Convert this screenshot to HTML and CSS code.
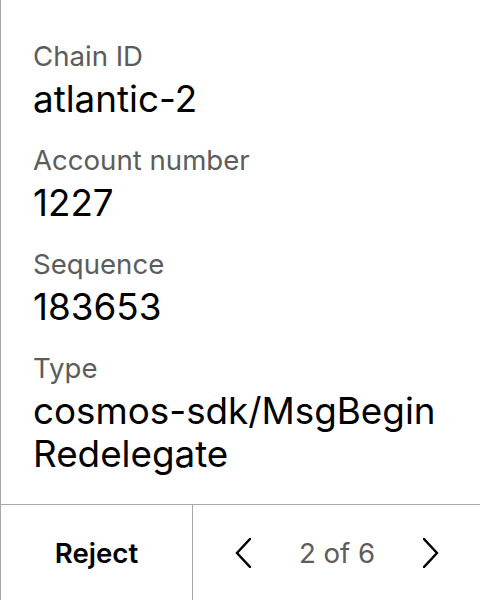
FILE: index.html
```html
<!DOCTYPE html>
<html lang="en">
<head>
<meta charset="utf-8">
<link rel="stylesheet" href="styles.css">
</head>
<body>
<div class="screen">
  <div class="details">
    <div class="field">
      <div class="label">Chain ID</div>
      <div class="value">atlantic-2</div>
    </div>
    <div class="field">
      <div class="label">Account number</div>
      <div class="value">1227</div>
    </div>
    <div class="field">
      <div class="label">Sequence</div>
      <div class="value">183653</div>
    </div>
    <div class="field">
      <div class="label">Type</div>
      <div class="value">cosmos-sdk/MsgBeginRedelegate</div>
    </div>
  </div>
  <div class="footer">
    <button class="reject">Reject</button>
    <div class="pager">
      <svg class="chev" width="16" height="30" viewBox="0 0 16 30"><path d="M15 1 L2 15 L15 29" fill="none" stroke="#000" stroke-width="2.4" stroke-linecap="square"/></svg>
      <span class="count">2 of 6</span>
      <svg class="chev" width="16" height="30" viewBox="0 0 16 30"><path d="M1 1 L14 15 L1 29" fill="none" stroke="#000" stroke-width="2.4" stroke-linecap="square"/></svg>
    </div>
  </div>
</div>
</body>
</html>
```

FILE: styles.css
```css
* { box-sizing: border-box; }
html, body { margin: 0; padding: 0; background: #fff; }
body { font-family: Inter, "Noto Sans", sans-serif; }
.screen {
  width: 480px;
  height: 600px;
  border-left: 1px solid #a8a8a8;
  display: flex;
  flex-direction: column;
}
.details {
  flex: 1;
  padding: 40px 32px 0 32px;
  display: flex;
  flex-direction: column;
  gap: 24px;
}
.field { display: flex; flex-direction: column; gap: 4px; }
.label {
  font-size: 27.6px;
  line-height: 33px;
  color: #5c5c5c;
}
.value {
  font-size: 36.8px;
  line-height: 43px;
  color: #000;
  word-break: break-all;
}
.footer {
  height: 96px;
  border-top: 1px solid #a8a8a8;
  display: flex;
}
.reject {
  width: 192px;
  border: none;
  border-right: 1px solid #a8a8a8;
  background: #fff;
  font-family: Inter, "Noto Sans", sans-serif;
  font-size: 27.6px;
  font-weight: 600;
  color: #000;
  padding: 0;
}
.pager {
  flex: 1;
  display: flex;
  align-items: center;
  justify-content: space-between;
  padding: 0 41px 0 42px;
}
.count {
  font-size: 27.6px;
  color: #5c5c5c;
}
.chev { display: block; }
```
